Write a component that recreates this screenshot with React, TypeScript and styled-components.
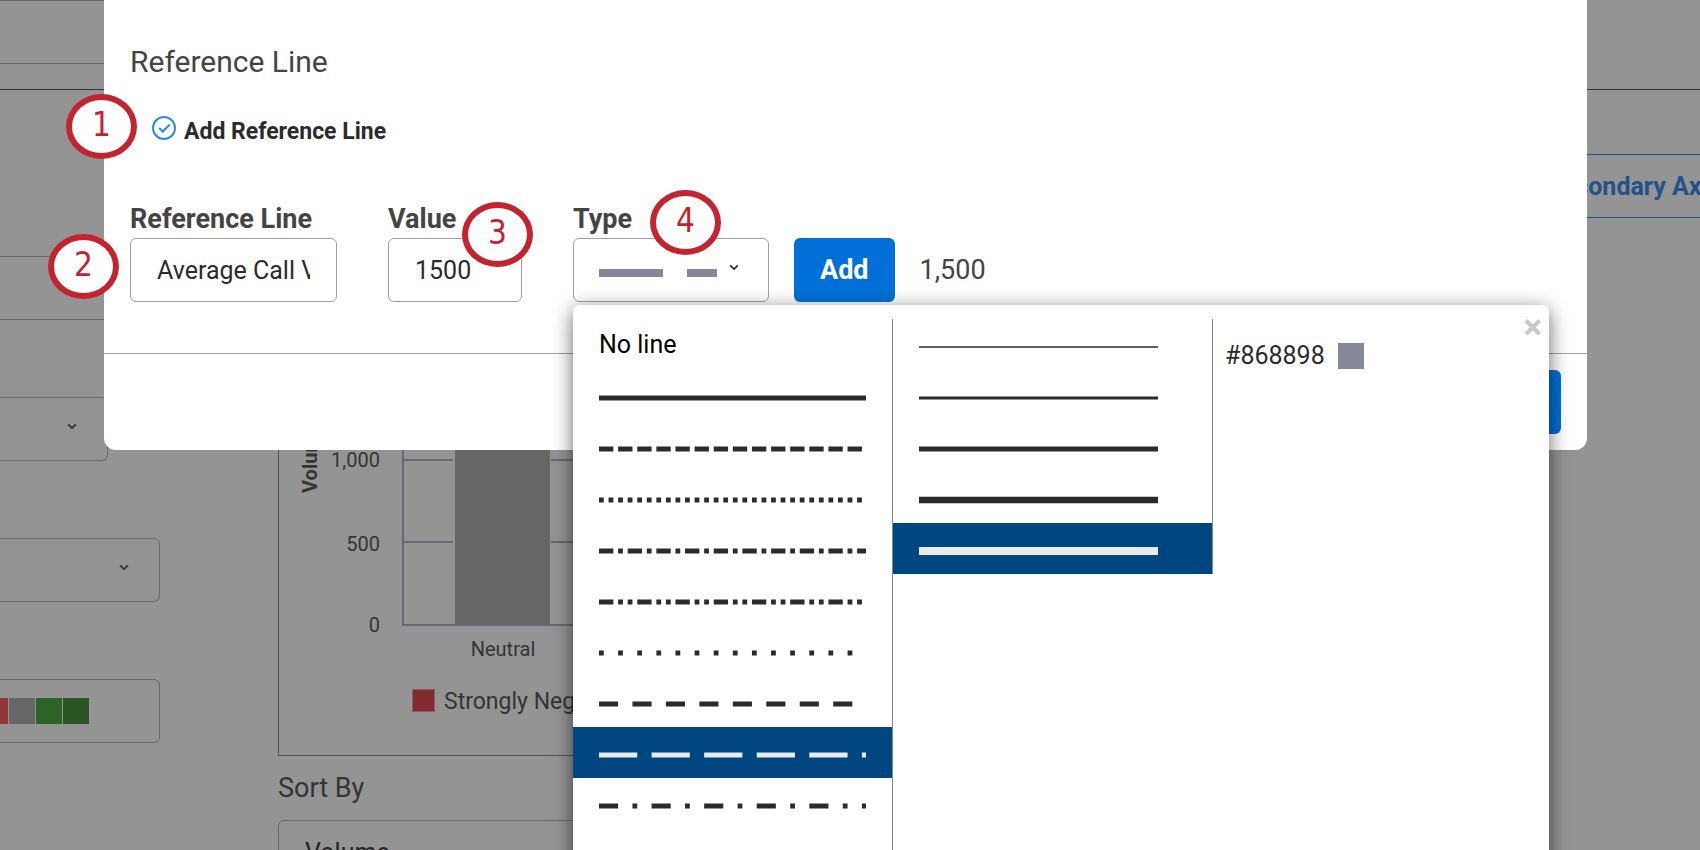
import React from 'react';
import styled, { createGlobalStyle } from 'styled-components';

const font = 'Roboto, "Noto Sans", sans-serif';

const colors = {
  page: '#949494',
  pageBorder: '#696969',
  pageText: '#343434',
  pageLink: '#23528a',
  text: '#444444',
  ink: '#2b2b2b',
  border: '#a0a0a0',
  primary: '#0070d8',
  selected: '#004680',
  annotation: '#c42430',
};

const GlobalStyle = createGlobalStyle`
  *, *::before, *::after { box-sizing: border-box; }
  html, body { margin: 0; padding: 0; }
  body { background: ${colors.page}; font-family: ${font}; }
  button, input, select { font: inherit; margin: 0; }
`;

const Page = styled.div`
  position: relative;
  height: 100vh;
  overflow: hidden;
  display: flex;
  flex-direction: column;
  background: ${colors.page};
  color: ${colors.pageText};
`;

const TopStrip = styled.header`
  flex: none;
  height: 90px;
  border-bottom: 1px solid #343134;
`;

const SearchField = styled.input`
  display: block;
  width: 50%;
  height: 64px;
  padding: 0 26px;
  border: 1px solid ${colors.pageBorder};
  border-left: 0;
  border-radius: 0 6px 6px 0;
  background: transparent;
`;

const Body = styled.div`
  flex: 1;
  display: flex;
`;

const Sidebar = styled.aside`
  flex: none;
  width: 278px;
  padding-top: 166px;
  display: flex;
  flex-direction: column;
  gap: 77px;
`;

const SideField = styled.div<{ $width: number }>`
  flex: none;
  display: flex;
  align-items: center;
  justify-content: flex-end;
  position: relative;
  width: ${(p) => p.$width}px;
  height: 64px;
  padding-right: 30px;
  border: 1px solid ${colors.pageBorder};
  border-left: 0;
  border-radius: 0 6px 6px 0;
`;

const SideSelect = styled.select`
  position: absolute;
  inset: 0;
  width: 100%;
  appearance: none;
  border: 0;
  background: transparent;
`;

const Palette = styled.div`
  display: flex;
  flex: none;
  gap: 1px;
  margin-right: 30px;
`;

const Swatch = styled.span<{ $color: string }>`
  flex: none;
  width: 26px;
  height: 26px;
  background: ${(p) => p.$color};
`;

const Main = styled.main`
  flex: 1;
  min-width: 0;
  padding-top: 64px;
  display: flex;
  flex-direction: column;
`;

const Toolbar = styled.div`
  display: flex;
  justify-content: flex-end;
  margin-right: -48px;
`;

const OutlineButton = styled.button`
  height: 64px;
  padding: 0 26px;
  border: 1px solid ${colors.pageLink};
  border-radius: 6px;
  background: transparent;
  color: ${colors.pageLink};
  font-size: 25px;
  font-weight: 700;
`;

const ChartCard = styled.section`
  flex: none;
  margin: 38px 200px 0 0;
  height: 500px;
  padding-bottom: 43px;
  border: 1px solid #505050;
  display: flex;
  flex-direction: column;
  justify-content: flex-end;
`;

const Legend = styled.div`
  display: flex;
  align-items: center;
  gap: 9px;
  margin-top: 21px;
  padding-left: 133px;
  font-size: 23px;
  line-height: 24px;
  white-space: nowrap;
`;

const LegendMark = styled.span`
  width: 23px;
  height: 23px;
  border: 1px solid #96595c;
  background: #7f2b2f;
`;

const LegendText = styled.span`
  padding-top: 3px;
  line-height: 21px;
`;

const SortLabel = styled.label`
  margin: 16px 0;
  font-size: 27px;
  line-height: 32px;
`;

const SortSelect = styled.select`
  flex: none;
  width: 50%;
  height: 64px;
  padding: 0 26px;
  appearance: none;
  border: 1px solid ${colors.pageBorder};
  border-radius: 6px;
  background: transparent;
  color: #242424;
  font-size: 25px;
`;

const Modal = styled.div`
  position: absolute;
  top: 0;
  left: 104px;
  right: 113px;
  border-radius: 0 0 12px 12px;
  background: #ffffff;
  color: ${colors.text};
`;

const ModalBody = styled.div`
  padding: 44px 26px 51px;
`;

const Title = styled.h2`
  margin: 0;
  font-size: 30px;
  font-weight: 400;
  line-height: 36px;
`;

const CheckRow = styled.label`
  display: flex;
  align-items: flex-start;
  gap: 8px;
  margin-top: 36px;
  padding-left: 22px;
  color: ${colors.ink};
  font-size: 23px;
  font-weight: 700;
  line-height: 32px;
`;

const RoundCheck = styled.input`
  flex: none;
  width: 24px;
  height: 24px;
  appearance: none;
  display: flex;
  align-items: center;
  justify-content: center;
  border: 2px solid #2b8ae6;
  border-radius: 50%;

  &:checked::after {
    content: '';
    width: 11px;
    height: 6px;
    margin-bottom: 3px;
    border: solid #2b8ae6;
    border-width: 0 0 2px 2px;
    transform: rotate(-45deg);
  }
`;

const FormRow = styled.div`
  display: flex;
  align-items: flex-end;
  gap: 25px;
  margin-top: 53px;
`;

const Fields = styled.div`
  display: flex;
  gap: 51px;
`;

const Field = styled.div<{ $width: number }>`
  position: relative;
  width: ${(p) => p.$width}px;
  display: flex;
  flex-direction: column;
`;

const FieldLabel = styled.label`
  padding-bottom: 1px;
  font-size: 27px;
  font-weight: 700;
  line-height: 36px;
`;

const TextInput = styled.input`
  width: 100%;
  height: 64px;
  padding: 0 26px;
  border: 1px solid ${colors.border};
  border-radius: 6px;
  background: #ffffff;
  color: ${colors.ink};
  font-size: 25px;
`;

const TypeButton = styled.button`
  width: 100%;
  height: 64px;
  padding: 0 29px 0 25px;
  display: flex;
  align-items: center;
  justify-content: space-between;
  border: 1px solid ${colors.border};
  border-radius: 6px;
  background: #ffffff;
`;

const PrimaryButton = styled.button`
  height: 64px;
  padding: 0 26px;
  border: 0;
  border-radius: 6px;
  background: ${colors.primary};
  color: #ffffff;
  font-size: 27px;
  font-weight: 700;
`;

const FormattedValue = styled.output`
  font-size: 27px;
  line-height: 64px;
`;

const ModalFooter = styled.footer`
  display: flex;
  justify-content: flex-end;
  padding: 16px 26px;
  border-top: 1px solid ${colors.border};
`;

const Popup = styled.div`
  position: absolute;
  z-index: 2;
  top: calc(100% + 3px);
  left: 0;
  width: 976px;
  padding-top: 14px;
  display: flex;
  align-items: flex-start;
  border-radius: 6px;
  background: #ffffff;
  box-shadow: 0 5px 20px rgba(0, 0, 0, 0.6);
`;

const StyleColumn = styled.div`
  flex: none;
  width: 320px;
  display: flex;
  flex-direction: column;
  border-right: 1px solid #8a8a8a;
`;

const StyleOption = styled.button<{ $selected?: boolean }>`
  height: 51px;
  padding: 0 26px;
  display: flex;
  align-items: center;
  border: 0;
  background: ${(p) => (p.$selected ? colors.selected : 'transparent')};
  color: ${(p) => (p.$selected ? '#eaeaea' : colors.ink)};
`;

const NoLine = styled.span`
  color: #000000;
  font-size: 25px;
`;

const ColorRow = styled.div`
  display: flex;
  align-items: center;
  gap: 13px;
  padding: 24px 12px;
  color: ${colors.ink};
  font-size: 25px;
  line-height: 26px;
`;

const CloseButton = styled.button`
  position: absolute;
  top: 13px;
  right: 7px;
  width: 18px;
  height: 18px;
  padding: 0;
  display: flex;
  border: 0;
  background: transparent;
  color: #c9c9c9;
`;

const Callout = styled.div<{ $left: number; $top: number }>`
  position: absolute;
  z-index: 1;
  left: ${(p) => p.$left}px;
  top: ${(p) => p.$top}px;
  width: 71px;
  height: 65px;
  padding-bottom: 4px;
  display: flex;
  align-items: center;
  justify-content: center;
  border: 6px solid ${colors.annotation};
  border-radius: 50%;
  background: #ffffff;
  color: ${colors.annotation};
  font-family: 'DejaVu Sans Condensed', 'DejaVu Sans', sans-serif;
  font-size: 33px;
  line-height: 32px;
`;

const PaletteField = styled(SideField)`
  ${Palette} { margin-right: 40px; }
`;

const Chevron = ({ color = '#2f2f2f' }: { color?: string }) => (
  <svg width="10" height="12" viewBox="0 0 10 12" fill="none" aria-hidden="true">
    <path d="M1.2 1.3 5 5.1 8.8 1.3" stroke={color} strokeWidth="1.7" />
  </svg>
);

/* Dash patterns are multiples of the stroke width. */
const LineSample = ({ width, stroke, dash }: { width: number; stroke: number; dash?: number[] }) => (
  <svg width={width} height="51" aria-hidden="true">
    <line
      x1="0"
      x2={width}
      y1="28"
      y2="28"
      stroke="currentColor"
      strokeWidth={stroke}
      strokeDasharray={dash ? dash.map((n) => n * stroke).join(' ') : undefined}
    />
  </svg>
);

const dashStyles: { name: string; dash?: number[] }[] = [
  { name: 'Solid' },
  { name: 'Short dash', dash: [3, 1] },
  { name: 'Short dot', dash: [1, 1] },
  { name: 'Short dash dot', dash: [3, 1, 1, 1] },
  { name: 'Short dash dot dot', dash: [3, 1, 1, 1, 1, 1] },
  { name: 'Dot', dash: [1, 3] },
  { name: 'Dash', dash: [4, 3] },
  { name: 'Long dash', dash: [8, 3] },
  { name: 'Dash dot', dash: [4, 3, 1, 3] },
  { name: 'Long dash dot', dash: [8, 3, 1, 3] },
  { name: 'Long dash dot dot', dash: [8, 3, 1, 3, 1, 3] },
];

const widths = [1.6, 3.2, 4.8, 6.4, 8];

const callouts = [
  { n: 1, left: -38, top: 94 },
  { n: 2, left: -56, top: 234 },
  { n: 3, left: 358, top: 202 },
  { n: 4, left: 546, top: 190 },
];

const VolumeChart = () => (
  <svg width="700" height="245" aria-hidden="true" fontFamily={font} fill={colors.pageText}>
    <text transform="translate(38 71) rotate(-90)" fontSize="20" fontWeight="700">Volume</text>
    <g fontSize="20" textAnchor="end">
      <text x="101" y="45">1,000</text>
      <text x="101" y="129">500</text>
      <text x="101" y="210">0</text>
    </g>
    <g stroke="#676778" strokeWidth="2">
      <path d="M125 38H174M272 38H700M125 120H174M272 120H700" />
      <path d="M124 0V203H700" fill="none" />
    </g>
    <rect x="176" y="0" width="95" height="202" fill="#666666" />
    <text x="224" y="234" fontSize="20" textAnchor="middle">Neutral</text>
  </svg>
);

export default function App() {
  return (
    <Page>
      <GlobalStyle />
      <TopStrip>
        <SearchField type="text" aria-label="Name" />
      </TopStrip>
      <Body>
        <Sidebar>
          <SideField $width={160}>
            <SideSelect aria-label="Group" />
          </SideField>
          <SideField $width={108}>
            <SideSelect aria-label="Size" />
            <Chevron />
          </SideField>
          <SideField $width={160}>
            <SideSelect aria-label="Calculation" />
            <Chevron />
          </SideField>
          <PaletteField $width={160}>
            <Palette>
              <Swatch $color="#943636" />
              <Swatch $color="#666666" />
              <Swatch $color="#2c6425" />
              <Swatch $color="#2a5424" />
            </Palette>
            <SideSelect aria-label="Palette" />
            <Chevron />
          </PaletteField>
        </Sidebar>
        <Main>
          <Toolbar>
            <OutlineButton type="button">Secondary Axis</OutlineButton>
          </Toolbar>
          <ChartCard>
            <VolumeChart />
            <Legend>
              <LegendMark />
              <LegendText>Strongly Negative</LegendText>
            </Legend>
          </ChartCard>
          <SortLabel htmlFor="sort">Sort By</SortLabel>
          <SortSelect id="sort">
            <option>Volume</option>
          </SortSelect>
        </Main>
      </Body>

      <Modal role="dialog" aria-labelledby="modal-title">
        <ModalBody>
          <Title id="modal-title">Reference Line</Title>
          <CheckRow>
            <RoundCheck type="checkbox" defaultChecked />
            Add Reference Line
          </CheckRow>
          <FormRow>
            <Fields>
              <Field $width={207}>
                <FieldLabel htmlFor="line-name">Reference Line</FieldLabel>
                <TextInput id="line-name" type="text" defaultValue="Average Call Volume" />
              </Field>
              <Field $width={134}>
                <FieldLabel htmlFor="line-value">Value</FieldLabel>
                <TextInput id="line-value" type="text" defaultValue="1500" />
              </Field>
              <Field $width={196}>
                <FieldLabel htmlFor="line-type">Type</FieldLabel>
                <TypeButton id="line-type" type="button" aria-haspopup="true" aria-expanded="true">
                  <svg width="118" height="20" aria-hidden="true">
                    <line x1="0" x2="118" y1="13" y2="13" stroke="#868898" strokeWidth="8" strokeDasharray="64 24" />
                  </svg>
                  <Chevron color="#2b2b2b" />
                </TypeButton>
                <Popup>
                  <StyleColumn>
                    <StyleOption type="button">
                      <NoLine>No line</NoLine>
                    </StyleOption>
                    {dashStyles.map((s) => (
                      <StyleOption key={s.name} type="button" aria-label={s.name} $selected={s.name === 'Long dash'}>
                        <LineSample width={267} stroke={4.78} dash={s.dash} />
                      </StyleOption>
                    ))}
                  </StyleColumn>
                  <StyleColumn>
                    {widths.map((w, i) => (
                      <StyleOption key={w} type="button" aria-label={`Width ${i + 1}`} $selected={i === 4}>
                        <LineSample width={239} stroke={w} />
                      </StyleOption>
                    ))}
                  </StyleColumn>
                  <ColorRow>
                    #868898
                    <Swatch $color="#868898" />
                  </ColorRow>
                  <CloseButton type="button" aria-label="Close">
                    <svg width="18" height="18" viewBox="0 0 18 18" aria-hidden="true">
                      <path d="M2 2.5 15.5 16M15.5 2.5 2 16" stroke="currentColor" strokeWidth="4.4" />
                    </svg>
                  </CloseButton>
                </Popup>
              </Field>
            </Fields>
            <PrimaryButton type="button">Add</PrimaryButton>
            <FormattedValue>1,500</FormattedValue>
          </FormRow>
        </ModalBody>
        <ModalFooter>
          <PrimaryButton type="button">Save</PrimaryButton>
        </ModalFooter>
        {callouts.map((c) => (
          <Callout key={c.n} $left={c.left} $top={c.top}>
            {c.n}
          </Callout>
        ))}
      </Modal>
    </Page>
  );
}
